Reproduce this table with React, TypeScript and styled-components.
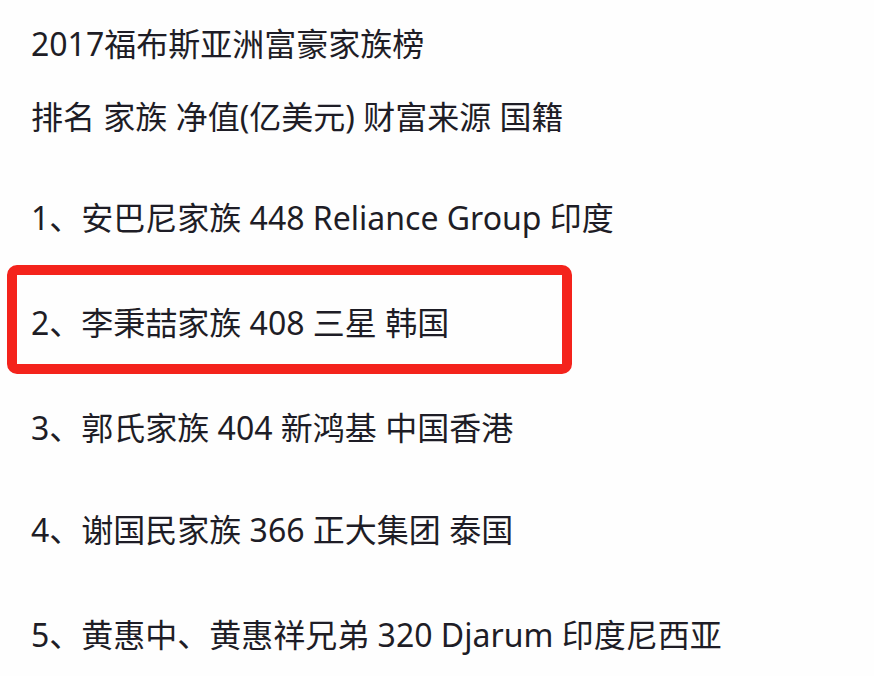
import styled, { createGlobalStyle } from 'styled-components';

const GlobalStyle = createGlobalStyle`
  html, body {
    margin: 0;
    padding: 0;
    background: #fefefe;
  }
  body {
    font-family: 'Noto Sans', 'Noto Sans CJK SC', sans-serif;
    color: #1e1d26;
  }
`;

const Page = styled.div`
  width: 874px;
  height: 676px;
  box-sizing: border-box;
  padding: 24px 0 0 7px;
  overflow: hidden;
`;

const Line = styled.p<{ $top?: number }>`
  margin: ${p => p.$top ?? 0}px 0 0;
  padding-left: 24px;
  font-size: 32px;
  line-height: 40px;
  height: 40px;
  white-space: nowrap;
`;

const Highlight = styled.div<{ $top: number }>`
  margin-top: ${p => p.$top}px;
  width: 565px;
  box-sizing: border-box;
  border: 10px solid #f4231c;
  border-radius: 10px;
  padding: 28px 0 21px 14px;
  font-size: 32px;
  line-height: 40px;
  white-space: nowrap;
`;

const rows = [
  { text: '1、安巴尼家族 448 Reliance Group 印度', top: 61 },
  { text: '2、李秉喆家族 408 三星 韩国', top: 27, marked: true },
  { text: '3、郭氏家族 404 新鸿基 中国香港', top: 34 },
  { text: '4、谢国民家族 366 正大集团 泰国', top: 62 },
  { text: '5、黄惠中、黄惠祥兄弟 320 Djarum 印度尼西亚', top: 65 },
];

export default function App() {
  return (
    <Page>
      <GlobalStyle />
      <Line>2017福布斯亚洲富豪家族榜</Line>
      <Line $top={33}>排名 家族 净值(亿美元) 财富来源 国籍</Line>
      {rows.map(r =>
        r.marked ? (
          <Highlight key={r.text} $top={r.top}>
            {r.text}
          </Highlight>
        ) : (
          <Line key={r.text} $top={r.top}>
            {r.text}
          </Line>
        )
      )}
    </Page>
  );
}
